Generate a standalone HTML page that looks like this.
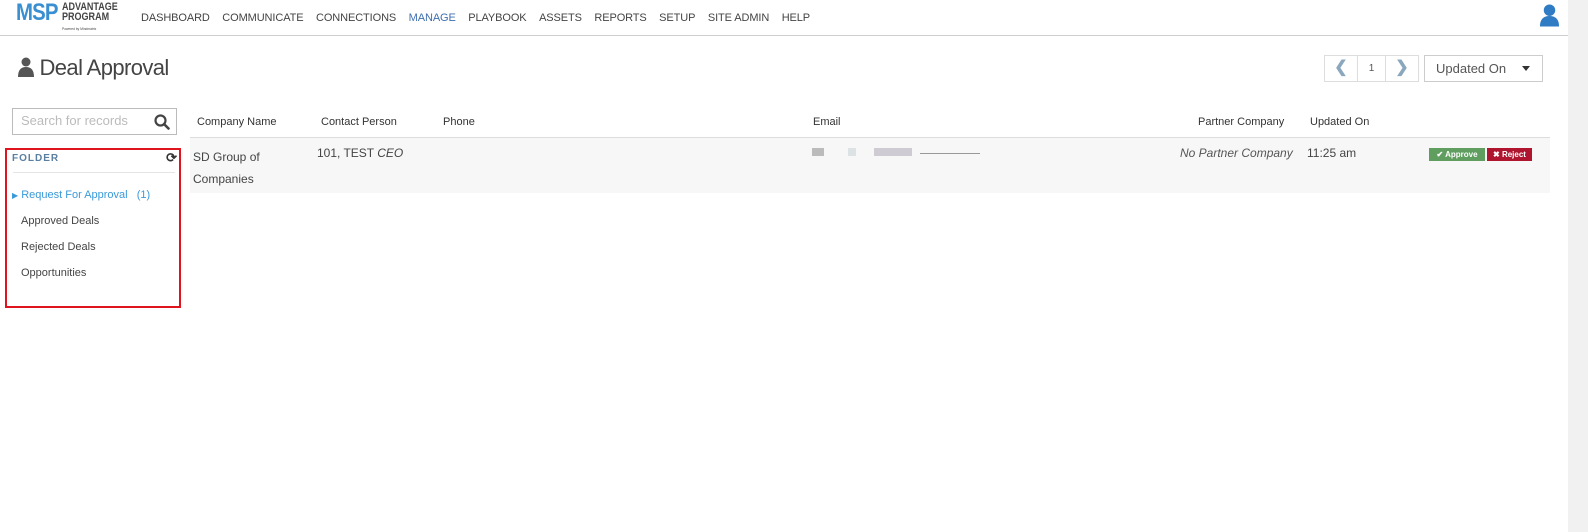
<!DOCTYPE html>
<html><head><meta charset="utf-8"><style>
*{box-sizing:border-box;margin:0;padding:0}
body{width:1588px;height:532px;background:#fff;font-family:"Liberation Sans",sans-serif;color:#333;position:relative;overflow:hidden}
.sb{position:absolute;right:0;top:0;width:20px;height:532px;background:#f1f1f1}
.hdr{position:absolute;left:0;top:0;width:1568px;height:36px;border-bottom:1px solid #cfcfcf}
.logo{position:absolute;left:16px;top:0px}
.nav{position:absolute;left:141px;top:12px;font-size:11px;color:#444;letter-spacing:-0.1px}
.nav span{margin-right:12.5px}
.title{position:absolute;left:18px;top:55px;font-size:22px;color:#444;letter-spacing:-0.6px}
.abs{position:absolute}
.search{left:12px;top:108px;width:165px;height:27px;border:1px solid #bbb;font-size:13px;color:#bbb;padding:4px 8px}
.folder{left:5px;top:148px;width:176px;height:160px;border:2px solid #e0141e}
.th{font-size:11px;color:#333;top:116px}
.row{left:190px;top:137px;width:1360px;height:56px;background:#f7f7f7;border-top:1px solid #ddd}
.td{font-size:12px;color:#444}
</style></head><body>
<div class="sb"></div>
<div class="hdr">
 <div class="logo">
  <span style="display:inline-block;font-weight:bold;font-size:24px;color:#3a8fd0;letter-spacing:-1px;transform:scaleX(0.85);transform-origin:left;line-height:26px">MSP</span>
  <div style="position:absolute;left:46px;top:2px;font-weight:bold;font-size:11px;line-height:10px;color:#444;transform:scaleX(0.82);transform-origin:left;white-space:nowrap">ADVANTAGE<br>PROGRAM<br><span style="font-size:4px;font-weight:normal;line-height:6px">Powered by Mindmatrix</span></div>
 </div>
 <div class="nav"><span>DASHBOARD</span><span>COMMUNICATE</span><span>CONNECTIONS</span><span style="color:#3e6fb0">MANAGE</span><span>PLAYBOOK</span><span>ASSETS</span><span>REPORTS</span><span>SETUP</span><span>SITE ADMIN</span><span>HELP</span></div>
 <svg class="abs" style="left:1539px;top:3px" width="21" height="24" viewBox="0 0 22 24"><circle cx="11" cy="7" r="6" fill="#2f7cc4"/><path d="M1 24 Q1 13 11 13 Q21 13 21 24Z" fill="#2f7cc4"/></svg>
</div>
<div class="title"><svg width="16" height="20" viewBox="0 0 16 20" style="vertical-align:-2px"><circle cx="8" cy="5" r="4.5" fill="#555"/><path d="M0 20 Q0 10 8 10 Q16 10 16 20Z" fill="#555"/></svg> Deal Approval</div>
<div class="abs" style="left:1324px;top:55px;width:95px;height:27px;border:1px solid #ddd;display:flex">
 <div style="width:33px;border-right:1px solid #ddd;text-align:center;color:#8aa7bd;font-size:16px;font-weight:bold;line-height:24px">&#10094;</div>
 <div style="width:28px;border-right:1px solid #ddd;text-align:center;font-size:10px;line-height:25px;color:#555">1</div>
 <div style="flex:1;text-align:center;color:#8aa7bd;font-size:16px;font-weight:bold;line-height:24px">&#10095;</div>
</div>
<div class="abs" style="left:1424px;top:55px;width:119px;height:27px;border:1px solid #ccc;font-size:13px;color:#555;padding:5px 11px">Updated On<span style="position:absolute;right:12px;top:10px;border-left:4px solid transparent;border-right:4px solid transparent;border-top:5px solid #333"></span></div>
<div class="abs search">Search for records<svg style="position:absolute;right:6px;top:5px" width="16" height="16" viewBox="0 0 16 16"><circle cx="6.5" cy="6.5" r="5" stroke="#444" stroke-width="2.2" fill="none"/><path d="M10 10 L14.5 14.5" stroke="#444" stroke-width="2.6" stroke-linecap="round"/></svg></div>
<div class="abs folder">
 <div style="position:absolute;left:5px;top:3px;font-size:10px;font-weight:bold;color:#5a7fa0;letter-spacing:1px">FOLDER</div>
 <div style="position:absolute;right:2px;top:0;font-size:13px;font-weight:bold;color:#333">&#10227;</div>
 <div style="position:absolute;left:6px;right:4px;top:22px;border-top:1px solid #e5e5e5"></div>
 <div style="position:absolute;left:5px;top:39px;font-size:11px;color:#3a9ad9"><span style="font-size:8px">&#9654;</span> Request For Approval &nbsp;&nbsp;(1)</div>
 <div style="position:absolute;left:14px;top:65px;font-size:11px;color:#444">Approved Deals</div>
 <div style="position:absolute;left:14px;top:91px;font-size:11px;color:#444">Rejected Deals</div>
 <div style="position:absolute;left:14px;top:117px;font-size:11px;color:#444">Opportunities</div>
</div>
<div class="abs th" style="left:197px">Company Name</div>
<div class="abs th" style="left:321px">Contact Person</div>
<div class="abs th" style="left:443px">Phone</div>
<div class="abs th" style="left:813px">Email</div>
<div class="abs th" style="left:1198px">Partner Company</div>
<div class="abs th" style="left:1310px">Updated On</div>
<div class="abs row"></div>
<div class="abs td" style="left:193px;top:146px;line-height:22px">SD Group of<br>Companies</div>
<div class="abs td" style="left:317px;top:146px">101, TEST <i>CEO</i></div>
<div class="abs" style="left:812px;top:148px;width:12px;height:8px;background:#bbb"></div>
<div class="abs" style="left:848px;top:148px;width:8px;height:8px;background:#dde2e4"></div>
<div class="abs" style="left:874px;top:148px;width:38px;height:8px;background:#cfcbd2"></div>
<div class="abs" style="left:920px;top:153px;width:60px;height:1px;background:#999"></div>
<div class="abs td" style="left:1180px;top:146px;color:#555"><i>No Partner Company</i></div>
<div class="abs td" style="left:1307px;top:146px">11:25 am</div>
<div class="abs" style="left:1429px;top:148px;width:56px;height:13px;background:#5f9e5f;color:#fff;font-size:8px;font-weight:bold;text-align:center;line-height:13px">&#10004; Approve</div>
<div class="abs" style="left:1487px;top:148px;width:45px;height:13px;background:#b01530;color:#fff;font-size:8px;font-weight:bold;text-align:center;line-height:13px">&#10006; Reject</div>
</body></html>
